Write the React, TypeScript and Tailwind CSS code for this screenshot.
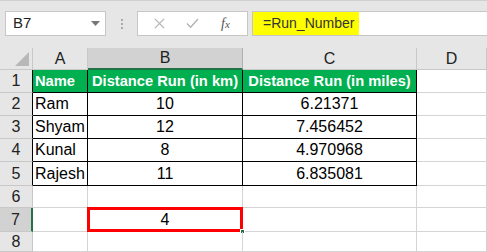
import React from 'react'

const font = { fontFamily: '"Liberation Sans", Arial, sans-serif' }

const cols = ['A', 'B', 'C', 'D']
const rowHeights = ['h-[23px]', 'h-[23px]', 'h-[23px]', 'h-[23px]', 'h-[24px]', 'h-[22px]', 'h-[24px]', 'h-[20px]']

const data = [
  ['Ram', '10', '6.21371'],
  ['Shyam', '12', '7.456452'],
  ['Kunal', '8', '4.970968'],
  ['Rajesh', '11', '6.835081'],
]

function FormulaBar() {
  return (
    <div className="h-[48px] bg-[#e6e6e6] border-t border-[#d0d0d0] flex items-start pt-[10px] pl-[5px]">
      <div className="w-[101px] h-[25px] bg-white border border-[#c6c6c6] flex items-center justify-between pl-[7px] pr-[5px]">
        <span className="text-[15px] text-[#222]">B7</span>
        <svg width="9" height="5" viewBox="0 0 9 5">
          <path d="M0 0h9L4.5 5z" fill="#777" />
        </svg>
      </div>
      <div className="w-[31px] h-[25px] flex flex-col items-center justify-center gap-[2px]">
        <span className="w-[2px] h-[2px] bg-[#aaa]" />
        <span className="w-[2px] h-[2px] bg-[#aaa]" />
        <span className="w-[2px] h-[2px] bg-[#aaa]" />
      </div>
      <div className="w-[111px] h-[25px] bg-white border border-[#c6c6c6] flex items-center">
        <svg className="ml-[16px]" width="11" height="11" viewBox="0 0 12 12">
          <path d="M1 1l10 10M11 1L1 11" stroke="#b4b4b4" strokeWidth="1.4" />
        </svg>
        <svg className="ml-[21px]" width="13" height="11" viewBox="0 0 14 12">
          <path d="M1 6l4 4 8-9" stroke="#b4b4b4" strokeWidth="1.6" fill="none" />
        </svg>
        <span className="ml-[22px] text-[14px] italic text-[#555]" style={{ fontFamily: '"Liberation Serif", serif' }}>
          f<span className="text-[11px]">x</span>
        </span>
      </div>
      <div className="ml-[4px] flex-1 h-[25px] bg-white border border-[#c6c6c6] border-r-0">
        <div className="w-[106px] h-full bg-[#ffff00] flex items-center pl-[10px] text-[14px] text-[#333]">
          =Run_Number
        </div>
      </div>
    </div>
  )
}

export default function App() {
  return (
    <div className="w-[487px] h-[252px] overflow-hidden bg-white" style={font}>
      <FormulaBar />
      <div className="grid grid-cols-[33px_55px_155px_174px_1fr]">
        {/* column headers */}
        <div className="h-[22px] bg-[#e6e6e6] border-r border-b border-[#c8c8c8] flex items-end justify-end p-[3px]">
          <svg width="14" height="14" viewBox="0 0 14 14">
            <path d="M14 0v14H0z" fill="#b8b8b8" />
          </svg>
        </div>
        {cols.map((c) => (
          <div
            key={c}
            className={
              c === 'B'
                ? 'h-[22px] bg-[#d2d2d2] border-r border-[#b0b0b0] border-b-2 border-b-[#217346] flex items-center justify-center text-[16px] text-[#222]'
                : 'h-[22px] bg-[#e6e6e6] border-r border-b border-[#c8c8c8] flex items-center justify-center text-[16px] text-[#222]'
            }
          >
            {c}
          </div>
        ))}

        {rowHeights.map((h, i) => {
          const r = i + 1
          const inTable = r <= 5
          const head = r === 1
          const row = r >= 2 && r <= 5 ? data[r - 2] : null
          const hdr =
            r === 7
              ? `${h} bg-[#d2d2d2] border-r-2 border-r-[#217346] border-b border-b-[#c8c8c8] flex items-center justify-center text-[16px] text-[#222]`
              : inTable
              ? `${h} bg-[#e6e6e6] border-r border-r-black border-b border-b-[#c8c8c8] flex items-center justify-center text-[16px] text-[#222]`
              : `${h} bg-[#e6e6e6] border-r border-b border-[#c8c8c8] flex items-center justify-center text-[16px] text-[#222]`
          const tcell = head
            ? `${h} bg-[#00b050] border-r border-b border-black flex items-center font-bold text-white text-[14.7px] whitespace-nowrap overflow-hidden`
            : `${h} border-r border-b border-black flex items-center text-[16px] text-black`
          const gcell = `${h} border-r border-b border-[#d4d4d4] flex items-center justify-center text-[16px] text-black`
          return (
            <React.Fragment key={r}>
              <div className={hdr}>{r}</div>
              {inTable ? (
                <>
                  <div className={`${tcell} pl-[2px] ${head ? '' : 'text-[15px]'}`}>{head ? 'Name' : row![0]}</div>
                  <div className={`${tcell} justify-center`}>{head ? 'Distance Run (in km)' : row![1]}</div>
                  <div className={`${tcell} justify-center`}>{head ? 'Distance Run (in miles)' : row![2]}</div>
                </>
              ) : (
                <>
                  <div className={gcell} />
                  <div className={`${gcell} relative`}>
                    {r === 7 && (
                      <>
                        <div className="absolute -top-[1px] -left-[1px] -right-[1px] -bottom-[1px] border-[3px] border-[#ff0000]" />
                        <span className="relative">4</span>
                        <div className="absolute -right-[3px] -bottom-[3px] w-[5px] h-[5px] bg-[#217346] border border-white" />
                      </>
                    )}
                  </div>
                  <div className={gcell} />
                </>
              )}
              <div className={gcell} />
            </React.Fragment>
          )
        })}
      </div>
    </div>
  )
}
